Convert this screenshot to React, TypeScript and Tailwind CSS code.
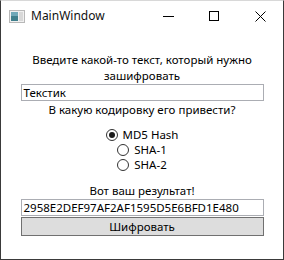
import React from 'react'

const hashTypes = [
  { id: 'md5', label: 'MD5 Hash', checked: true },
  { id: 'sha1', label: 'SHA-1', checked: false },
  { id: 'sha2', label: 'SHA-2', checked: false }
]

const Radio = ({ checked }: { checked: boolean }) => (
  <span className="w-[12px] h-[12px] rounded-full border border-[#333333] bg-white flex items-center justify-center">
    {checked && <span className="w-[6px] h-[6px] rounded-full bg-[#1a1a1a]" />}
  </span>
)

const App = () => {
  return (
    <div
      className="w-[284px] h-[260px] bg-white border-x border-b border-t border-x-[#3a3a3a] border-b-[#3a3a3a] border-t-[#d8d8d8] flex flex-col text-black overflow-hidden"
      style={{ fontFamily: '"Noto Sans", "Open Sans", sans-serif' }}
    >
      {/* title bar */}
      <div className="h-[30px] flex items-center shrink-0">
        <svg className="ml-[8px]" width="16" height="13" viewBox="0 0 16 13">
          <rect x="0.5" y="0.5" width="15" height="12" fill="#f0f0f0" stroke="#b8b8b8" />
          <rect x="2" y="2" width="7" height="9" fill="#3f7f8c" />
          <rect x="2" y="2" width="7" height="4" fill="#6fa8b8" />
          <rect x="10" y="2" width="4" height="9" fill="#d8d8d8" />
        </svg>
        <span className="ml-[6px] text-[12px] leading-none text-[#111]">MainWindow</span>
        <div className="ml-auto flex items-center h-full">
          <div className="w-[46px] h-full flex items-center justify-center">
            <div className="w-[11px] h-px bg-black" />
          </div>
          <div className="w-[46px] h-full flex items-center justify-center">
            <div className="w-[10px] h-[10px] border border-black" />
          </div>
          <div className="w-[46px] h-full flex items-center justify-center">
            <svg width="11" height="11" viewBox="0 0 11 11">
              <path d="M0.5 0.5 L10.5 10.5 M10.5 0.5 L0.5 10.5" stroke="#000" strokeWidth="1" />
            </svg>
          </div>
        </div>
      </div>

      {/* content */}
      <div className="flex flex-col items-center px-[20px] text-[11.5px] leading-[16px]">
        <div className="mt-[21px] text-center w-[243px]">
          Введите какой-то текст, который нужно
          <br />
          зашифровать
        </div>
        <div className="w-[243px] h-[17px] border border-[#abadb3] flex items-center px-[2px] leading-none">
          Текстик
        </div>
        <div className="mt-[1px]">В какую кодировку его привести?</div>

        <div className="mt-[9px] flex flex-col items-center leading-[15px]">
          {hashTypes.map(h => (
            <div key={h.id} className="h-[15px] flex items-center gap-[5px]">
              <Radio checked={h.checked} />
              <span>{h.label}</span>
            </div>
          ))}
        </div>

        <div className="mt-[11px]">Вот ваш результат!</div>
        <div className="w-[243px] h-[17px] border border-[#abadb3] flex items-center px-[2px] leading-none">
          2958E2DEF97AF2AF1595D5E6BFD1E480
        </div>
        <div className="mt-[1px] w-[243px] h-[19px] border border-[#707070] bg-[#dddddd] flex items-center justify-center leading-none">
          Шифровать
        </div>
      </div>
    </div>
  )
}

export default App
